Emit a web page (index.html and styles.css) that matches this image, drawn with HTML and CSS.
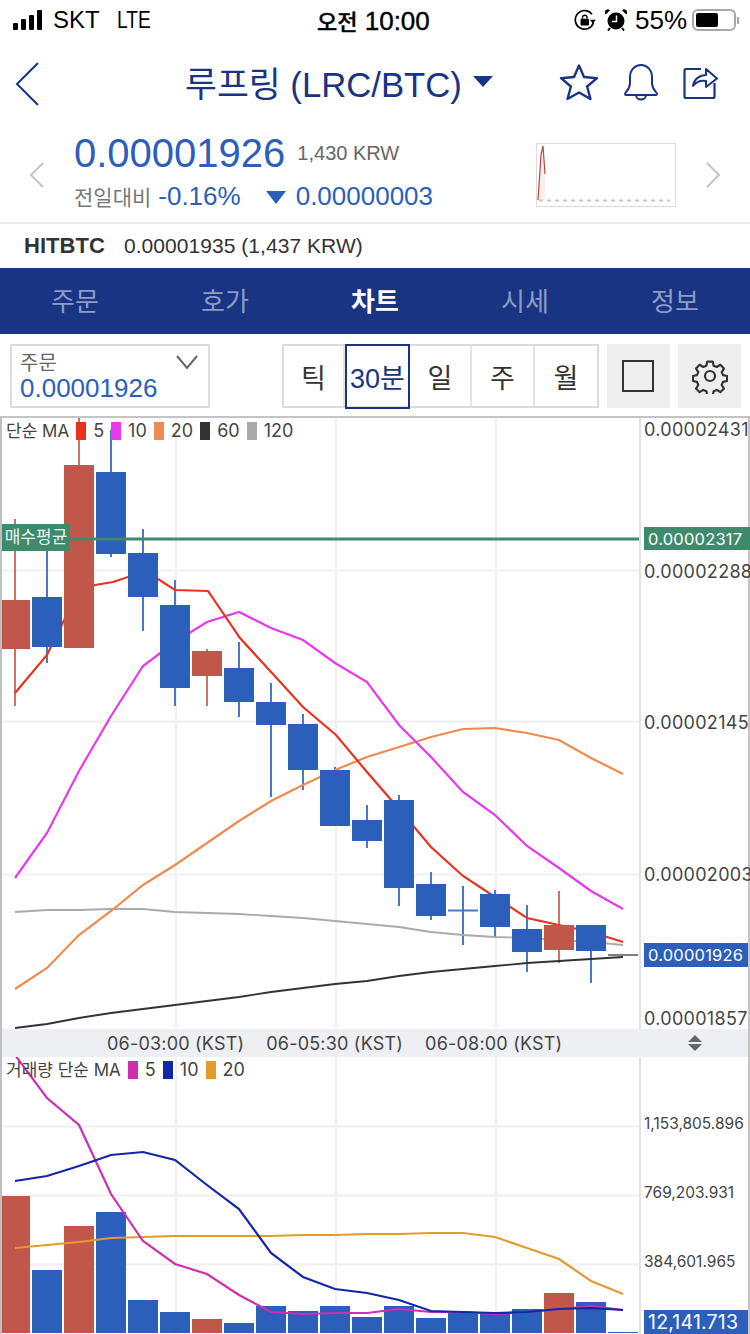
FILE: index.html
```html
<!DOCTYPE html>
<html lang="ko">
<head>
    <meta charset="UTF-8">
    <meta name="viewport" content="width=device-width, initial-scale=1.0">
    <title>루프링 (LRC/BTC)</title>
    <link rel="stylesheet" href="styles.css">
</head>
<body>
<div class="page">
    <div class="status-bar">
        <div class="status-left">
            <span class="signal"><i class="s1"></i><i class="s2"></i><i class="s3"></i><i class="s4"></i></span>
            <span>SKT</span>
            <span class="lte">LTE</span>
        </div>
        <div class="status-time"><span class="time-ampm">오전</span> 10:00</div>
        <div class="status-right">
            <svg class="icon-lock" width="22" height="22" viewBox="0 0 22 22">
                <path d="M19.500 13.500A9.300 9.300 0 1 1 18 5.200" fill="none" stroke="#000" stroke-width="1.700"/>
                <path d="M15.800 10.800h6l-3 3.800z" fill="#000"/>
                <rect x="6.500" y="9.800" width="8.500" height="6.700" rx="1" fill="#000"/>
                <path d="M8.500 9.800V8a2.300 2.300 0 0 1 4.500 0v1.800" fill="none" stroke="#000" stroke-width="1.400"/>
            </svg>
            <svg class="icon-alarm" width="22" height="22" viewBox="0 0 22 22">
                <circle cx="11" cy="12" r="8.500" fill="#000"/>
                <path d="M11.500 6.500v6H7" fill="none" stroke="#fff" stroke-width="1.500"/>
                <path d="M.8 5.500 5 1.200A3 3 0 0 0 .8 5.500zM21.200 5.500 17 1.200a3 3 0 0 1 4.200 4.300z" fill="#000"/>
                <path d="M5 19l-2 2.500M17 19l2 2.500" stroke="#000" stroke-width="2"/>
            </svg>
            <span class="battery-text">55%</span>
            <span class="battery"><i></i></span>
            <span class="battery-cap"></span>
        </div>
    </div>

    <header class="nav">
        <svg class="back" width="26" height="46" viewBox="0 0 26 46">
            <path d="M23 2 2 23l21 21" fill="none" stroke="#183482" stroke-width="2"/>
        </svg>
        <h1 class="nav-title">루프링 (LRC/BTC)<span class="caret"></span></h1>
        <div class="nav-icons">
            <svg width="40" height="38" viewBox="0 0 40 38">
                <path d="M20 2.500 25 14l13 1.200-9.900 8.300L31.500 36 20 29.500 8.500 36l3.400-12.500L2 15.200 15 14z" fill="none" stroke="#183482" stroke-width="2.400" stroke-linejoin="round"/>
            </svg>
            <svg width="36" height="38" viewBox="0 0 36 38">
                <path d="M2 31c0-2 5-4 5-11v-6c0-7 5-12 11-12s11 5 11 12v6c0 7 5 9 5 11 0 .5-.5 1-1 1H3c-.5 0-1-.5-1-1z" fill="none" stroke="#183482" stroke-width="2"/>
                <path d="M13 32a5 4.500 0 0 0 10 0" fill="none" stroke="#183482" stroke-width="2"/>
            </svg>
            <svg width="36" height="36" viewBox="0 0 36 36">
                <path d="M18 5H3a1.500 1.500 0 0 0-1.500 1.500v26A1.500 1.500 0 0 0 3 34h27a1.500 1.500 0 0 0 1.500-1.500V19" fill="none" stroke="#183482" stroke-width="2.200"/>
                <path d="M10 22c1-7 7-11 13-11V5l11 9.500L23 23v-6c-5-1-10 1-13 5z" fill="#fff" stroke="#183482" stroke-width="2" stroke-linejoin="round"/>
            </svg>
        </div>
    </header>

    <section class="price">
        <svg class="arrow" width="18" height="28" viewBox="0 0 18 28"><path d="M15 2 3 14l12 12" fill="none" stroke="#c4c4c4" stroke-width="2"/></svg>
        <div class="price-main">
            <div class="price-top">
                <span class="price-now">0.00001926</span>
                <span class="price-krw">1,430 KRW</span>
            </div>
            <div class="price-diff">
                <span class="diff-label">전일대비</span>
                <span class="diff-pct">-0.16%</span>
                <span class="diff-tri"></span>
                <span class="diff-val">0.00000003</span>
            </div>
        </div>
        <svg class="mini-chart" width="140" height="64" viewBox="0 0 140 64">
            <rect x=".5" y=".5" width="139" height="63" fill="#fff" stroke="#dcdcdc"/>
            <path d="M2 57 5 12 7 3 9 31V57z" fill="#fbeeee"/>
            <path d="M2 57 5 12 7 3 9 31" fill="none" stroke="#c0453a" stroke-width="1.200"/>
            <path d="M3 57.500H134" stroke="#c8c8c8" stroke-width="2" stroke-dasharray="4 4"/>
        </svg>
        <svg class="arrow" width="18" height="28" viewBox="0 0 18 28"><path d="M3 2l12 12L3 26" fill="none" stroke="#c4c4c4" stroke-width="2"/></svg>
    </section>

    <div class="exchange">
        <strong>HITBTC</strong>
        <span>0.00001935 (1,437 KRW)</span>
    </div>

    <nav class="tabs">
        <a>주문</a>
        <a>호가</a>
        <a class="on">차트</a>
        <a>시세</a>
        <a>정보</a>
    </nav>

    <div class="toolbar">
        <div class="order-box">
            <div class="order-text">
                <span class="order-label">주문</span>
                <span class="order-val">0.00001926</span>
            </div>
            <svg class="order-caret" width="24" height="16" viewBox="0 0 24 16"><path d="M2 2l10 12L22 2" fill="none" stroke="#666" stroke-width="2"/></svg>
        </div>
        <div class="periods">
            <span>틱</span>
            <span class="on">30분</span>
            <span>일</span>
            <span>주</span>
            <span>월</span>
        </div>
        <div class="tool-btns">
            <button class="tool"><i class="square"></i></button>
            <button class="tool">
                <svg width="36" height="36" viewBox="0 0 36 36">
                    <path d="M15 2h6l1 4.500 3.500 1.500 4-2.500 4 4.200-2.500 4 1.500 3.300 4.500 1v5.500l-4.500 1-1.500 3.500 2.500 4-4 4-4-2.500-3.500 1.500-1 4.500h-6l-1-4.500-3.500-1.500-4 2.500-4-4 2.500-4-1.500-3.500-4.500-1v-5.500l4.500-1 1.500-3.300-2.500-4 4-4.200 4 2.500L14 6.500z" transform="translate(1.800 1.800) scale(.9)" fill="none" stroke="#333" stroke-width="2.400" stroke-linejoin="round"/>
                    <circle cx="18" cy="18" r="5" fill="none" stroke="#333" stroke-width="2.200"/>
                </svg>
            </button>
        </div>
    </div>

    <section class="chart">
        <div class="plot plot-price">
            <div class="legend">
                <span class="legend-name">단순 MA</span>
                <i class="c-red"></i><span>5</span>
                <i class="c-magenta"></i><span>10</span>
                <i class="c-orange"></i><span>20</span>
                <i class="c-dark"></i><span>60</span>
                <i class="c-grey"></i><span>120</span>
            </div>
            <div class="avg-tag">매수평균</div>
            <svg width="750" height="613" viewBox="0 416 750 613">
                <g class="grid">
                    <path d="M176 418V1029M336 418V1029M496 418V1029"/>
                    <path d="M2 570.500H639M2 721.500H639M2 874.500H639"/>
                </g>
                <g class="wick-up">
                    <path d="M15 519V706M79 418V465M207 649V706M559 891V963"/>
                </g>
                <g class="wick-down">
                    <path d="M47 545V663M111 430V557M143 529V631M175 580V706M239 642V717M271 683V797M303 714V790M335 767V826M367 805V848M399 795V906M431 872V920M463 886V945M448 910.500H478M495 890V938M527 905V972M591 925V983"/>
                </g>
                <polyline class="ma ma120" points="15,912 47,910 79,910 111,909 143,909 175,912 207,913 239,914 271,916 303,918 335,921 367,924 399,927 431,932 463,935 495,937 527,938 559,940 591,942 623,945"/>
                <polyline class="ma ma60" points="15,1028 47,1024 79,1018 111,1013 143,1009 175,1005 207,1001 239,997 271,992 303,988 335,984 367,981 399,976 431,972 463,969 495,966 527,963 559,961 591,959 623,957"/>
                <path class="last-tick" d="M608 955H638"/>
                <polyline class="ma ma20" points="15,989 47,968 79,935 111,911 143,885 175,865 207,843 239,821 271,801 303,785 335,770 367,757 399,747 431,737 463,729 495,728 527,733 559,740 591,758 623,774"/>
                <polyline class="ma ma10" points="15,878 47,833 79,771 111,716 143,666 175,642 207,622 239,612 271,628 303,640 335,663 367,682 399,725 431,757 463,792 495,815 527,846 559,868 591,891 623,909"/>
                <polyline class="ma ma5" points="15,693 47,655 79,590 95,585 113,582 128,577 158,579 175,590 208,591 240,638 272,673 303,707 336,735 367,772 399,809 431,847 463,876 495,897 527,918 559,925 591,932 623,942"/>
                <g class="body-up">
                    <rect x="2" y="600" width="28" height="49"/>
                    <rect x="64" y="465" width="30" height="183"/>
                    <rect x="192" y="651" width="30" height="25"/>
                    <rect x="544" y="925" width="30" height="25"/>
                </g>
                <g class="body-down">
                    <rect x="32" y="597" width="30" height="50"/>
                    <rect x="96" y="472" width="30" height="82"/>
                    <rect x="128" y="553" width="30" height="44"/>
                    <rect x="160" y="605" width="30" height="83"/>
                    <rect x="224" y="668" width="30" height="34"/>
                    <rect x="256" y="702" width="30" height="23"/>
                    <rect x="288" y="724" width="30" height="46"/>
                    <rect x="320" y="770" width="30" height="56"/>
                    <rect x="352" y="820" width="30" height="21"/>
                    <rect x="384" y="800" width="30" height="88"/>
                    <rect x="416" y="884" width="30" height="32"/>
                    <rect x="480" y="894" width="30" height="33"/>
                    <rect x="512" y="929" width="30" height="23"/>
                    <rect x="576" y="925" width="30" height="26"/>
                </g>
                <path class="avg-line" d="M2 539H639"/>
                <path class="axis-line" d="M640 418V1029"/>
                <g class="axis-text">
                    <text x="644" y="436">0.00002431</text>
                    <text x="644" y="578">0.00002288</text>
                    <text x="644" y="729">0.00002145</text>
                    <text x="644" y="881">0.00002003</text>
                    <text x="644" y="1025">0.00001857</text>
                </g>
                <rect class="tag-green" x="644" y="527" width="106" height="23"/>
                <text class="tag-text" x="648" y="545">0.00002317</text>
                <rect class="tag-blue" x="644" y="943" width="104" height="24"/>
                <text class="tag-text" x="648" y="961">0.00001926</text>
            </svg>
        </div>

        <div class="x-axis">
            <span>06-03:00 (KST)</span>
            <span>06-05:30 (KST)</span>
            <span>06-08:00 (KST)</span>
            <svg class="resize" width="18" height="18" viewBox="0 0 18 18"><path d="M9 1l7 7H2zM2 10h14l-7 7z" fill="#666"/></svg>
        </div>

        <div class="plot plot-volume">
            <div class="legend legend-volume">
                <span class="legend-name">거래량 단순 MA</span>
                <i class="c-pink"></i><span>5</span>
                <i class="c-navy"></i><span>10</span>
                <i class="c-amber"></i><span>20</span>
            </div>
            <svg width="750" height="277" viewBox="0 1057 750 277">
                <g class="grid">
                    <path d="M176 1057V1334M336 1057V1334M496 1057V1334"/>
                    <path d="M2 1126.500H639M2 1195.500H639M2 1264.500H639"/>
                </g>
                <g class="body-up">
                    <rect x="2" y="1196" width="28" height="137"/>
                    <rect x="64" y="1226" width="30" height="107"/>
                    <rect x="192" y="1319" width="30" height="14"/>
                    <rect x="544" y="1293" width="30" height="40"/>
                </g>
                <g class="body-down">
                    <rect x="32" y="1270" width="30" height="63"/>
                    <rect x="96" y="1212" width="30" height="121"/>
                    <rect x="128" y="1300" width="30" height="33"/>
                    <rect x="160" y="1312" width="30" height="21"/>
                    <rect x="224" y="1323" width="30" height="10"/>
                    <rect x="256" y="1306" width="30" height="27"/>
                    <rect x="288" y="1311" width="30" height="22"/>
                    <rect x="320" y="1306" width="30" height="27"/>
                    <rect x="352" y="1317" width="30" height="16"/>
                    <rect x="384" y="1306" width="30" height="27"/>
                    <rect x="416" y="1318" width="30" height="15"/>
                    <rect x="448" y="1313" width="30" height="20"/>
                    <rect x="480" y="1313" width="30" height="20"/>
                    <rect x="512" y="1309" width="30" height="24"/>
                    <rect x="576" y="1302" width="30" height="31"/>
                    <rect x="608" y="1332" width="30" height="1"/>
                </g>
                <polyline class="ma vol20" points="15,1248 47,1245 79,1242 111,1238 143,1237 175,1236 207,1236 239,1236 271,1236 303,1235 335,1235 367,1234 399,1234 431,1233 463,1233 495,1237 527,1248 559,1259 591,1281 623,1294"/>
                <polyline class="ma vol5" points="15,1055 47,1098 79,1125 111,1194 143,1241 175,1264 207,1274 239,1295 271,1312 303,1314 335,1313 367,1313 399,1309 431,1312 463,1312 495,1314 527,1312 559,1309 591,1306 623,1310"/>
                <polyline class="ma vol10" points="15,1181 47,1176 79,1166 111,1155 143,1152 175,1160 207,1185 239,1209 271,1253 303,1277 335,1289 367,1293 399,1300 431,1311 463,1312 495,1313 527,1312 559,1309 591,1308 623,1310"/>
                <path class="axis-line" d="M640 1057V1334"/>
                <g class="axis-text axis-small">
                    <text x="644" y="1129">1,153,805.896</text>
                    <text x="644" y="1198">769,203.931</text>
                    <text x="644" y="1267">384,601.965</text>
                </g>
                <rect class="tag-blue" x="644" y="1310" width="104" height="24"/>
                <text class="tag-text tag-large" x="648" y="1329">12,141.713</text>
            </svg>
        </div>
    </section>
</div>
</body>
</html>
```

FILE: styles.css
```css
* {
    box-sizing: border-box;
}
body {
    margin: 0;
    background-color: #fff;
    font-family: "Liberation Sans", "Noto Sans CJK KR", sans-serif;
    color: #333;
}
.page {
    width: 750px;
    height: 1334px;
    overflow: hidden;
    position: relative;
}

/* status bar */
.status-bar {
    height: 40px;
    padding: 0 6px 0 13px;
    display: flex;
    align-items: center;
    color: #000;
    font-size: 24px;
}
.status-left {
    width: 304px;
    display: flex;
    align-items: center;
    gap: 8px;
    font-size: 24px;
}
.lte {
    margin-left: 9px;
    transform: scaleX(.8);
    transform-origin: left center;
}
.signal {
    display: flex;
    align-items: flex-end;
    gap: 3px;
    height: 20px;
    margin-right: 3px;
}
.signal i {
    width: 5px;
    background-color: #000;
    border-radius: 1px;
}
.s1 { height: 7px; }
.s2 { height: 11px; }
.s3 { height: 15px; }
.s4 { height: 20px; }
.status-time {
    font-size: 26px;
    font-weight: 500;
    -webkit-text-stroke: .4px #000;
    white-space: nowrap;
}
.time-ampm {
    font-size: 22px;
}
.status-right {
    margin-left: auto;
    width: 170px;
    display: flex;
    align-items: center;
    gap: 9px;
    font-size: 26px;
}
.battery-text {
    margin-left: -1px;
    margin-right: -4px;
}
.battery {
    width: 44px;
    height: 22px;
    border: 2px solid #a8a8a8;
    border-radius: 6px;
    padding: 2px;
    display: block;
}
.battery i {
    display: block;
    width: 22px;
    height: 14px;
    background-color: #000;
    border-radius: 2px;
}
.battery-cap {
    width: 2px;
    height: 7px;
    margin-left: -8px;
    background-color: #a8a8a8;
}

/* nav */
.nav {
    height: 88px;
    padding-left: 185px;
    position: relative;
    display: flex;
    align-items: center;
}
.back {
    position: absolute;
    left: 15px;
    top: 21px;
}
.nav-title {
    margin: 0 0 5px;
    font-size: 34.700px;
    font-weight: 400;
    color: #183482;
    display: flex;
    align-items: center;
    white-space: nowrap;
}
.caret {
    margin-left: 11px;
    border-left: 10px solid transparent;
    border-right: 10px solid transparent;
    border-top: 11px solid #183482;
}
.nav-icons {
    position: absolute;
    right: 31px;
    top: 23px;
    display: flex;
    align-items: center;
    gap: 24px;
}

/* price */
.price {
    height: 96px;
    padding: 0 28px;
    display: flex;
    align-items: center;
    border-bottom: 2px solid #ececec;
}
.price-main {
    margin-left: 28px;
    width: 443px;
    padding-bottom: 8px;
}
.price-top {
    display: flex;
    align-items: center;
    height: 50px;
}
.price-now {
    font-size: 40px;
    color: #2b5fbb;
}
.price-krw {
    margin-left: 12px;
    font-size: 20px;
    color: #666;
}
.price-diff {
    display: flex;
    align-items: center;
    height: 36px;
    font-size: 26px;
    color: #2b5fbb;
}
.diff-label {
    font-size: 21px;
    color: #777;
    margin-right: 7px;
}
.diff-tri {
    margin: 2px 10px 0 25px;
    border-left: 10px solid transparent;
    border-right: 10px solid transparent;
    border-top: 13px solid #2b5fbb;
}
.mini-chart {
    margin: 0 28px 0 19px;
    flex: none;
}
.arrow {
    flex: none;
}

/* exchange row */
.exchange {
    height: 44px;
    padding-left: 24px;
    display: flex;
    align-items: center;
    gap: 19px;
    font-size: 21px;
    letter-spacing: .05px;
    color: #333;
}
.exchange strong {
    font-size: 22px;
}

/* tabs */
.tabs {
    height: 66px;
    padding-bottom: 4px;
    background-color: #183482;
    display: grid;
    grid-template-columns: repeat(5, 150px);
    align-items: center;
    text-align: center;
    font-size: 26px;
    color: #8d9cc6;
}
.tabs .on {
    color: #fff;
    font-weight: 700;
}

/* toolbar */
.toolbar {
    height: 82px;
    padding: 10px 9px 8px 10px;
    display: flex;
}
.order-box {
    width: 200px;
    border: 2px solid #dcdcdc;
    padding: 5px 8px 3px;
    display: flex;
    justify-content: space-between;
}
.order-text {
    display: flex;
    flex-direction: column;
}
.order-label {
    font-size: 20px;
    line-height: 24px;
    color: #666;
}
.order-val {
    font-size: 26px;
    line-height: 27px;
    color: #2b5fbb;
}
.order-caret {
    margin: 3px 1px 0 0;
}
.periods {
    margin-left: 72px;
    width: 317px;
    display: grid;
    grid-template-columns: 61px 65px 62px 63px 62px;
    border: 2px solid #dcdcdc;
    font-size: 27px;
    color: #333;
    align-items: stretch;
}
.periods span {
    display: flex;
    align-items: center;
    justify-content: center;
    border-right: 2px solid #e4e4e4;
    white-space: nowrap;
}
.periods span:last-child {
    border-right: 0;
}
.periods .on {
    margin: -2px 0 -3px;
    border: 2px solid #183482;
    color: #183482;
}
.tool-btns {
    margin-left: 8px;
    display: flex;
    gap: 8px;
}
.tool {
    width: 63px;
    padding: 0;
    border: 0;
    background-color: #eee;
    display: flex;
    align-items: center;
    justify-content: center;
}
.square {
    display: block;
    width: 32px;
    height: 32px;
    margin-left: -2px;
    border: 2px solid #333;
}

/* chart */
.chart {
    border-top: 2px solid #c4c4c4;
    height: 918px;
    margin-right: 2px;
    border-left: 2px solid #c0c0c0;
    box-shadow: 2px 0 0 #c4c4c4;
}
.plot {
    position: relative;
}
.plot svg {
    display: block;
    margin: -2px 0 0 -2px;
}
.plot-volume svg {
    margin-top: 0;
}
.legend {
    position: absolute;
    left: 4px;
    top: 5px;
    z-index: 1;
    display: flex;
    align-items: center;
    gap: 7px;
    font-size: 18px;
    line-height: 20px;
    color: #444;
    font-family: Inter, "Noto Sans CJK KR", sans-serif;
}
.legend-name {
    font-size: 17px;
}
.legend i {
    display: block;
    width: 10px;
    height: 18px;
}
.c-red { background-color: #e8321f; }
.c-magenta { background-color: #e838ee; }
.c-orange { background-color: #ef8a50; }
.c-dark { background-color: #333; }
.c-grey { background-color: #aaa; }
.c-pink { background-color: #cf2eb2; }
.c-navy { background-color: #1426a8; }
.c-amber { background-color: #e39b2f; }
.legend-volume {
    top: 3px;
}
.avg-tag {
    position: absolute;
    left: 0;
    top: 108px;
    z-index: 1;
    width: 68px;
    height: 27px;
    background-color: #3f8a6d;
    color: #e9f4ef;
    font-size: 17px;
    line-height: 27px;
    text-align: center;
    white-space: nowrap;
}
.x-axis {
    height: 28px;
    padding-left: 105px;
    background-color: #eeeff3;
    display: flex;
    align-items: center;
    gap: 22px;
    font-size: 18px;
    letter-spacing: .2px;
    color: #444;
    font-family: Inter, sans-serif;
    position: relative;
}
.resize {
    position: absolute;
    left: 684px;
    top: 5px;
}

/* svg parts */
.grid path {
    fill: none;
    stroke: #f0f0f0;
    stroke-width: 2;
}
.wick-up path {
    fill: none;
    stroke: #cf6f66;
    stroke-width: 2;
}
.wick-down path {
    fill: none;
    stroke: #4a78c8;
    stroke-width: 2;
}
.body-up rect {
    fill: #c1574a;
}
.body-down rect {
    fill: #2b5fbb;
}
.ma {
    fill: none;
    stroke-width: 2.200;
}
.ma5 { stroke: #e8321f; }
.ma10 { stroke: #e838ee; }
.ma20 { stroke: #ef8a50; }
.ma60 { stroke: #333; stroke-width: 1.800; }
.ma120 { stroke: #aaa; stroke-width: 1.800; }
.vol5 { stroke: #cf2eb2; }
.vol10 { stroke: #1426a8; }
.vol20 { stroke: #e39b2f; }
.last-tick {
    stroke: #555;
    stroke-width: 1.500;
}
.avg-line {
    stroke: #3f8a6d;
    stroke-width: 3;
}
.axis-line {
    stroke: #e2e2e2;
    stroke-width: 2;
}
.axis-text text {
    font-family: Inter, sans-serif;
    font-size: 18px;
    letter-spacing: .3px;
    fill: #444;
}
.axis-text.axis-small text {
    font-size: 15.500px;
    letter-spacing: 0;
}
.tag-green {
    fill: #3f8a6d;
}
.tag-blue {
    fill: #2b5fbb;
}
.tag-text {
    font-family: Inter, sans-serif;
    font-size: 16.500px;
    letter-spacing: .2px;
    fill: #fff;
}
.tag-large {
    font-size: 19.500px;
}
```
